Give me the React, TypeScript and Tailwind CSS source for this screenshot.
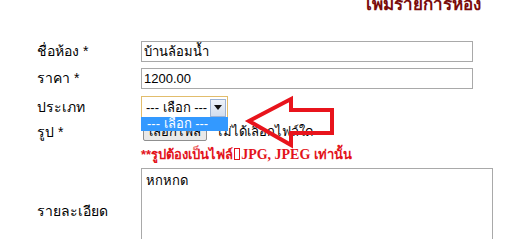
import React from "react";

const thai = { fontFamily: '"Liberation Sans", "DejaVu Sans", "Noto Sans", sans-serif' };

function SelectBox() {
  return (
    <div className="relative w-[87px] h-[23px]">
      <div className="flex items-center h-full border border-[#e2bd6c] bg-white pl-[4px] pr-[1px] text-[13px] text-black">
        <span className="flex-1 whitespace-nowrap">--- เลือก ---</span>
        <span className="flex items-center justify-center w-[16px] h-[18px] border border-[#9db3d3] bg-gradient-to-b from-[#eef3fa] to-[#d3deee]">
          <svg width="8" height="5" viewBox="0 0 8 5">
            <path d="M0 0 L8 0 L4 5 Z" fill="#111" />
          </svg>
        </span>
      </div>
      {/* opened option list */}
      <div className="absolute left-0 top-[21px] w-[87px] h-[14px] bg-[#3399ff] text-white text-[13px] leading-[14px] pl-[6px] whitespace-nowrap z-10">
        --- เลือก ---
      </div>
    </div>
  );
}

export default function App() {
  return (
    <div className="relative w-[522px] h-[239px] overflow-hidden bg-white text-black" style={thai}>
      {/* Title, scrolled mostly out of view */}
      <div className="h-[14px] overflow-hidden flex items-end pl-[366px]">
        <h1 className="text-[17px] font-bold leading-[20px] text-[#7a0c0c] -mb-[1px] whitespace-nowrap">
          เพิ่มรายการห้อง
        </h1>
      </div>

      <div className="pl-[37px] pt-[27px] text-[14px]">
        <div className="flex items-center h-[21px]">
          <label className="w-[104px]">ชื่อห้อง *</label>
          <div className="w-[332px] h-[21px] border border-[#a9a9a9] px-[2px] text-[13px] leading-[19px]">บ้านล้อมน้ำ</div>
        </div>
        <div className="flex items-center h-[21px] mt-[6px]">
          <label className="w-[104px]">ราคา *</label>
          <div className="w-[332px] h-[21px] border border-[#a9a9a9] px-[2px] text-[13px] leading-[19px]">1200.00</div>
        </div>
        <div className="flex items-center h-[23px] mt-[7px]">
          <label className="w-[104px]">ประเภท</label>
          <SelectBox />
        </div>
        <div className="flex items-center h-[18px] mt-[4px]">
          <label className="w-[104px]">รูป *</label>
          <div className="flex items-center gap-[9px] text-[13px]">
            <span className="ml-[2px] w-[64px] h-[18px] border border-[#8f8f8f] rounded-[2px] bg-[#e9e9e9] text-center leading-[16px]">เลือกไฟล์</span>
            <span>ไม่ได้เลือกไฟล์ใด</span>
          </div>
        </div>
        <div className="flex items-center h-[20px] mt-[3px]">
          <span className="w-[104px]" />
          <span className="text-[14px] font-bold text-[#e3131b] whitespace-nowrap" style={{ fontFamily: '"Liberation Serif", "DejaVu Serif", serif' }}>
            <span className="text-[13px]" style={thai}>**รูปต้องเป็นไฟล์</span>
            <span className="inline-block w-[6px] h-[12px] border border-[#e3131b] mx-[1px] align-[-1px]" />
            JPG, JPEG <span className="text-[13px]" style={thai}>เท่านั้น</span>
          </span>
        </div>
        <div className="flex items-center mt-[4px]">
          <label className="w-[104px]">รายละเอียด</label>
          <div className="w-[352px] h-[86px] border border-[#a9a9a9] px-[4px] pt-[4px] text-[13px] leading-[16px]">หกหกด</div>
        </div>
      </div>

      {/* red arrow annotation */}
      <svg className="absolute left-0 top-0 pointer-events-none" width="522" height="239" viewBox="0 0 522 239">
        <path
          d="M249 121 L291 99 L291 110 L332 110 L332 133 L291 133 L291 145 Z"
          fill="none"
          stroke="#e8141c"
          strokeWidth="4"
          strokeLinejoin="miter"
        />
      </svg>
    </div>
  );
}
